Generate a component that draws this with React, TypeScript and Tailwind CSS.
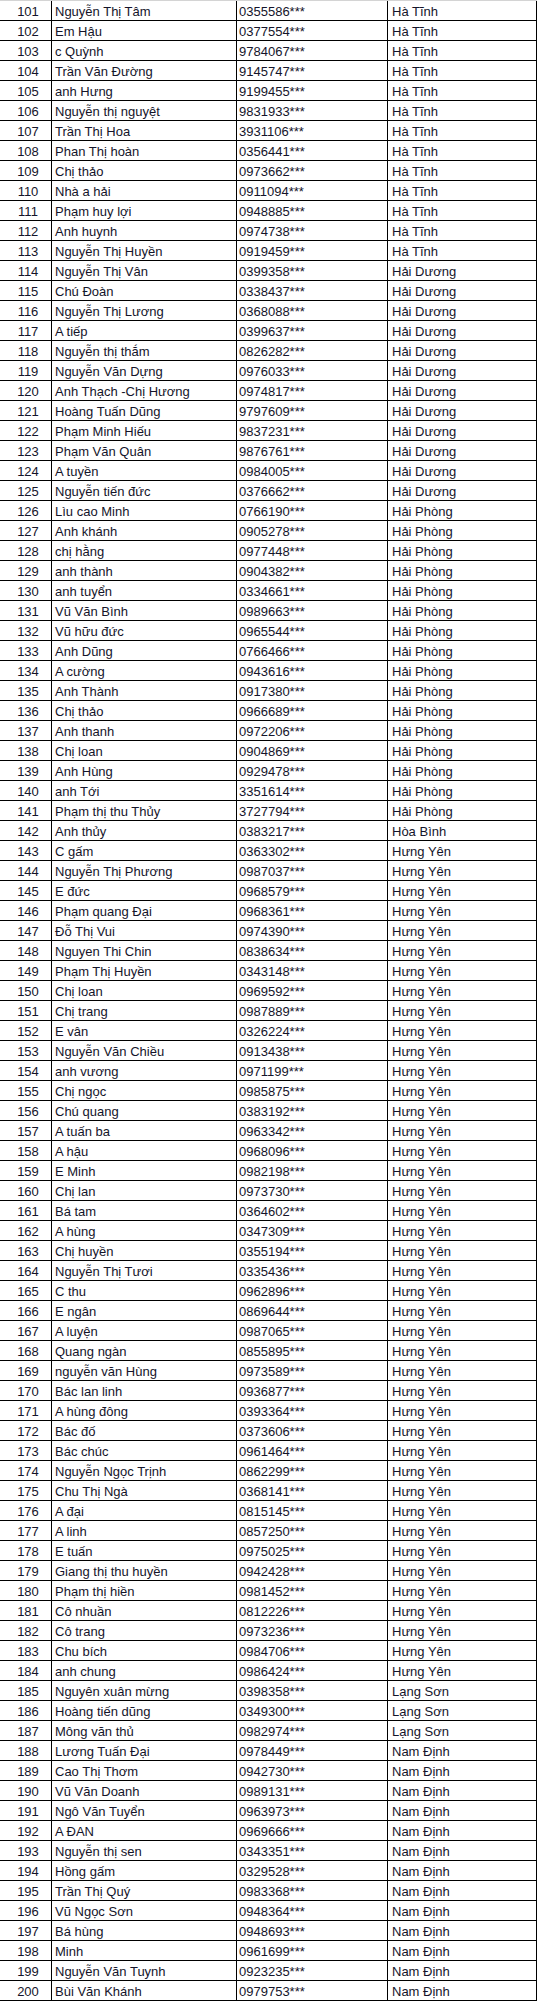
import React from 'react';

type Row = [string, string, string];

// name | phone | province, numbered from 101
const rows: Row[] = [
  ['Nguyễn Thị Tâm', '0355586***', 'Hà Tĩnh'],
  ['Em Hậu', '0377554***', 'Hà Tĩnh'],
  ['c Quỳnh', '9784067***', 'Hà Tĩnh'],
  ['Trần Văn Đường', '9145747***', 'Hà Tĩnh'],
  ['anh Hưng', '9199455***', 'Hà Tĩnh'],
  ['Nguyễn thị nguyệt', '9831933***', 'Hà Tĩnh'],
  ['Trần Thị Hoa', '3931106***', 'Hà Tĩnh'],
  ['Phan Thị hoàn', '0356441***', 'Hà Tĩnh'],
  ['Chị thảo', '0973662***', 'Hà Tĩnh'],
  ['Nhà a hải', '0911094***', 'Hà Tĩnh'],
  ['Phạm huy lợi', '0948885***', 'Hà Tĩnh'],
  ['Anh huynh', '0974738***', 'Hà Tĩnh'],
  ['Nguyễn Thị Huyền', '0919459***', 'Hà Tĩnh'],
  ['Nguyễn Thị Vân', '0399358***', 'Hải Dương'],
  ['Chú Đoàn', '0338437***', 'Hải Dương'],
  ['Nguyễn Thị Lương', '0368088***', 'Hải Dương'],
  ['A tiếp', '0399637***', 'Hải Dương'],
  ['Nguyễn thị thắm', '0826282***', 'Hải Dương'],
  ['Nguyễn Văn Dựng', '0976033***', 'Hải Dương'],
  ['Anh Thạch -Chị Hương', '0974817***', 'Hải Dương'],
  ['Hoàng Tuấn Dũng', '9797609***', 'Hải Dương'],
  ['Phạm Minh Hiếu', '9837231***', 'Hải Dương'],
  ['Phạm Văn Quân', '9876761***', 'Hải Dương'],
  ['A tuyền', '0984005***', 'Hải Dương'],
  ['Nguyễn tiến đức', '0376662***', 'Hải Dương'],
  ['Lìu cao Minh', '0766190***', 'Hải Phòng'],
  ['Anh khánh', '0905278***', 'Hải Phòng'],
  ['chị hằng', '0977448***', 'Hải Phòng'],
  ['anh thành', '0904382***', 'Hải Phòng'],
  ['anh tuyển', '0334661***', 'Hải Phòng'],
  ['Vũ Văn Bình', '0989663***', 'Hải Phòng'],
  ['Vũ hữu đức', '0965544***', 'Hải Phòng'],
  ['Anh Dũng', '0766466***', 'Hải Phòng'],
  ['A cường', '0943616***', 'Hải Phòng'],
  ['Anh Thành', '0917380***', 'Hải Phòng'],
  ['Chị thảo', '0966689***', 'Hải Phòng'],
  ['Anh thanh', '0972206***', 'Hải Phòng'],
  ['Chị loan', '0904869***', 'Hải Phòng'],
  ['Anh Hùng', '0929478***', 'Hải Phòng'],
  ['anh Tới', '3351614***', 'Hải Phòng'],
  ['Phạm thị thu Thủy', '3727794***', 'Hải Phòng'],
  ['Anh thủy', '0383217***', 'Hòa Bình'],
  ['C gấm', '0363302***', 'Hưng Yên'],
  ['Nguyễn Thị Phương', '0987037***', 'Hưng Yên'],
  ['E đức', '0968579***', 'Hưng Yên'],
  ['Phạm quang Đại', '0968361***', 'Hưng Yên'],
  ['Đỗ Thị Vui', '0974390***', 'Hưng Yên'],
  ['Nguyen Thi Chin', '0838634***', 'Hưng Yên'],
  ['Phạm Thị Huyền', '0343148***', 'Hưng Yên'],
  ['Chị loan', '0969592***', 'Hưng Yên'],
  ['Chị trang', '0987889***', 'Hưng Yên'],
  ['E vân', '0326224***', 'Hưng Yên'],
  ['Nguyễn Văn Chiều', '0913438***', 'Hưng Yên'],
  ['anh vương', '0971199***', 'Hưng Yên'],
  ['Chị ngọc', '0985875***', 'Hưng Yên'],
  ['Chú quang', '0383192***', 'Hưng Yên'],
  ['A tuấn ba', '0963342***', 'Hưng Yên'],
  ['A hậu', '0968096***', 'Hưng Yên'],
  ['E Minh', '0982198***', 'Hưng Yên'],
  ['Chị lan', '0973730***', 'Hưng Yên'],
  ['Bá tam', '0364602***', 'Hưng Yên'],
  ['A hùng', '0347309***', 'Hưng Yên'],
  ['Chị huyền', '0355194***', 'Hưng Yên'],
  ['Nguyễn Thị Tươi', '0335436***', 'Hưng Yên'],
  ['C thu', '0962896***', 'Hưng Yên'],
  ['E ngân', '0869644***', 'Hưng Yên'],
  ['A luyện', '0987065***', 'Hưng Yên'],
  ['Quang ngàn', '0855895***', 'Hưng Yên'],
  ['nguyễn văn Hùng', '0973589***', 'Hưng Yên'],
  ['Bác lan linh', '0936877***', 'Hưng Yên'],
  ['A hùng đông', '0393364***', 'Hưng Yên'],
  ['Bác đố', '0373606***', 'Hưng Yên'],
  ['Bác chúc', '0961464***', 'Hưng Yên'],
  ['Nguyễn Ngọc Trịnh', '0862299***', 'Hưng Yên'],
  ['Chu Thị Ngà', '0368141***', 'Hưng Yên'],
  ['A đại', '0815145***', 'Hưng Yên'],
  ['A linh', '0857250***', 'Hưng Yên'],
  ['E tuấn', '0975025***', 'Hưng Yên'],
  ['Giang thị thu huyền', '0942428***', 'Hưng Yên'],
  ['Phạm thị hiền', '0981452***', 'Hưng Yên'],
  ['Cô nhuần', '0812226***', 'Hưng Yên'],
  ['Cô trang', '0973236***', 'Hưng Yên'],
  ['Chu bích', '0984706***', 'Hưng Yên'],
  ['anh chung', '0986424***', 'Hưng Yên'],
  ['Nguyên xuân mừng', '0398358***', 'Lạng Sơn'],
  ['Hoàng tiến dũng', '0349300***', 'Lạng Sơn'],
  ['Mông văn thủ', '0982974***', 'Lạng Sơn'],
  ['Lương Tuấn Đại', '0978449***', 'Nam Định'],
  ['Cao Thị Thơm', '0942730***', 'Nam Định'],
  ['Vũ Văn Doanh', '0989131***', 'Nam Định'],
  ['Ngô Văn Tuyển', '0963973***', 'Nam Định'],
  ['A ĐAN', '0969666***', 'Nam Định'],
  ['Nguyễn thị sen', '0343351***', 'Nam Định'],
  ['Hồng gấm', '0329528***', 'Nam Định'],
  ['Trần Thị Quý', '0983368***', 'Nam Định'],
  ['Vũ Ngọc Sơn', '0948364***', 'Nam Định'],
  ['Bá hùng', '0948693***', 'Nam Định'],
  ['Minh', '0961699***', 'Nam Định'],
  ['Nguyễn Văn Tuynh', '0923235***', 'Nam Định'],
  ['Bùi Văn Khánh', '0979753***', 'Nam Định'],
];

const cell = 'h-full border-r border-black pt-[2px] leading-[18px] whitespace-nowrap overflow-hidden';

export default function App() {
  return (
    <div className="w-[537px] bg-white border-t border-[#d4d4d4] font-['Liberation_Sans',Arial,sans-serif] text-[13px] text-[#14142a]">
      {rows.map(([name, phone, province], i) => (
        <div key={i} className="flex h-5 border-b border-black">
          <div className={`${cell} w-[52px] pl-[5px] text-center`}>{101 + i}</div>
          <div className={`${cell} w-[185px] pl-[3px]`}>{name}</div>
          <div className={`${cell} w-[151px] pl-[2px]`}>{phone}</div>
          <div className={`${cell} w-[149px] pl-[4px]`}>{province}</div>
        </div>
      ))}
    </div>
  );
}
